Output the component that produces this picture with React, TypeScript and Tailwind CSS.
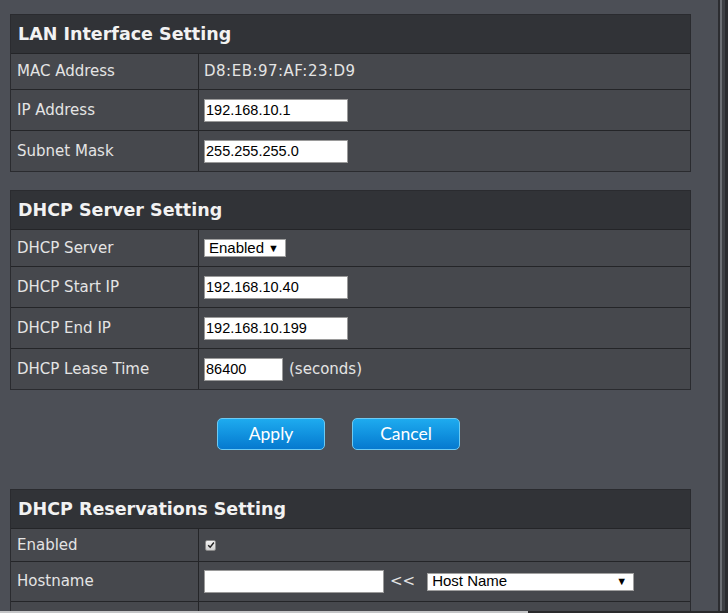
import React from 'react';

const labelFont = { fontFamily: '"DejaVu Sans", Verdana, sans-serif' };
const fieldFont = { fontFamily: '"Liberation Sans", Arial, sans-serif' };

function SectionHeader({ title }: { title: string }) {
  return (
    <div
      className="flex h-[38px] items-center bg-[#313337] pl-[7px] text-[17.5px] font-bold text-[#f2f2f2]"
      style={labelFont}
    >
      {title}
    </div>
  );
}

function Row({ label, height, children }: { label?: string; height: string; children?: React.ReactNode }) {
  return (
    <div className={`flex border-t border-[#242528] bg-[#46484d] ${height}`}>
      <div
        className="flex w-[188px] shrink-0 items-center border-r border-[#242528] pl-[6px] text-[15px] text-[#e4e4e4]"
        style={labelFont}
      >
        {label}
      </div>
      <div className="flex flex-1 items-center pl-[5px] text-[15px] text-[#e4e4e4]" style={labelFont}>
        {children}
      </div>
    </div>
  );
}

function TextBox({ value, width }: { value: string; width: string }) {
  return (
    <input
      readOnly
      value={value}
      className={`h-[23px] ${width} border border-[#9a9a9a] bg-white px-[1px] text-[14.5px] text-black outline-none`}
      style={fieldFont}
    />
  );
}

function SelectBox({ value, width }: { value: string; width: string }) {
  return (
    <div
      className={`flex h-[18px] ${width} items-center justify-between border border-[#a0a0a0] bg-white pl-[4px] pr-[6px] text-[15px] text-black`}
      style={fieldFont}
    >
      <span>{value}</span>
      <span className="text-[11px] leading-none">▼</span>
    </div>
  );
}

function BlueButton({ label }: { label: string }) {
  return (
    <button
      type="button"
      className="h-[32px] w-[108px] rounded-[5px] border border-[#6ccaf3] bg-gradient-to-b from-[#1eabef] to-[#0679cf] text-[17.5px] text-white"
      style={{ fontFamily: 'Lato, "Open Sans", sans-serif' }}
    >
      {label}
    </button>
  );
}

export default function App() {
  return (
    <div className="flex h-[613px] w-[728px] flex-col overflow-hidden bg-[#4c4f56]">
      <div className="flex min-h-0 flex-1">
        <div className="w-[718px] pl-[10px] pt-[14px]">
          {/* LAN */}
          <div className="w-[681px] border border-[#2a2b2f]">
            <SectionHeader title="LAN Interface Setting" />
            <Row label="MAC Address" height="h-[36px]">
              <span className="tracking-[0.5px]">D8:EB:97:AF:23:D9</span>
            </Row>
            <Row label="IP Address" height="h-[41px]">
              <TextBox value="192.168.10.1" width="w-[144px]" />
            </Row>
            <Row label="Subnet Mask" height="h-[41px]">
              <TextBox value="255.255.255.0" width="w-[144px]" />
            </Row>
          </div>

          {/* DHCP server */}
          <div className="mt-[18px] w-[681px] border border-[#2a2b2f]">
            <SectionHeader title="DHCP Server Setting" />
            <Row label="DHCP Server" height="h-[37px]">
              <SelectBox value="Enabled" width="w-[82px]" />
            </Row>
            <Row label="DHCP Start IP" height="h-[41px]">
              <TextBox value="192.168.10.40" width="w-[144px]" />
            </Row>
            <Row label="DHCP End IP" height="h-[41px]">
              <TextBox value="192.168.10.199" width="w-[144px]" />
            </Row>
            <Row label="DHCP Lease Time" height="h-[41px]">
              <TextBox value="86400" width="w-[79px]" />
              <span className="ml-[6px]">(seconds)</span>
            </Row>
          </div>

          <div className="mt-[28px] flex gap-[27px] pl-[207px]">
            <BlueButton label="Apply" />
            <BlueButton label="Cancel" />
          </div>

          {/* Reservations */}
          <div className="mt-[39px] w-[681px] border border-[#2a2b2f]">
            <SectionHeader title="DHCP Reservations Setting" />
            <Row label="Enabled" height="h-[33px]">
              <span className="ml-[1px] flex h-[11px] w-[11px] items-center justify-center rounded-[2px] border border-[#8a8a8a] bg-gradient-to-b from-[#f4f4f4] to-[#cfcfcf]">
                <svg viewBox="0 0 10 10" className="h-[8px] w-[8px]">
                  <path d="M1.5 5.2 L4 7.8 L8.6 1.8" fill="none" stroke="#222" strokeWidth="1.8" />
                </svg>
              </span>
            </Row>
            <Row label="Hostname" height="h-[40px]">
              <TextBox value="" width="w-[180px]" />
              <span className="ml-[6px] mr-[12px]">&lt;&lt;</span>
              <SelectBox value="Host Name" width="w-[207px]" />
            </Row>
            <Row height="h-[41px]" />
          </div>
        </div>

        {/* window edge */}
        <div className="flex w-[10px] shrink-0">
          <div className="w-[2px] bg-[#2c2d31]" />
          <div className="w-[2px] bg-[#6b6e74]" />
          <div className="w-[3px] bg-[#3d3f44]" />
          <div className="w-[3px] bg-[#2a2b2f]" />
        </div>
      </div>
      <div className="flex h-[2px] shrink-0">
        <div className="w-[528px] bg-[#c4c5c7]" />
        <div className="flex-1 bg-[#2a2a2c]" />
      </div>
    </div>
  );
}
